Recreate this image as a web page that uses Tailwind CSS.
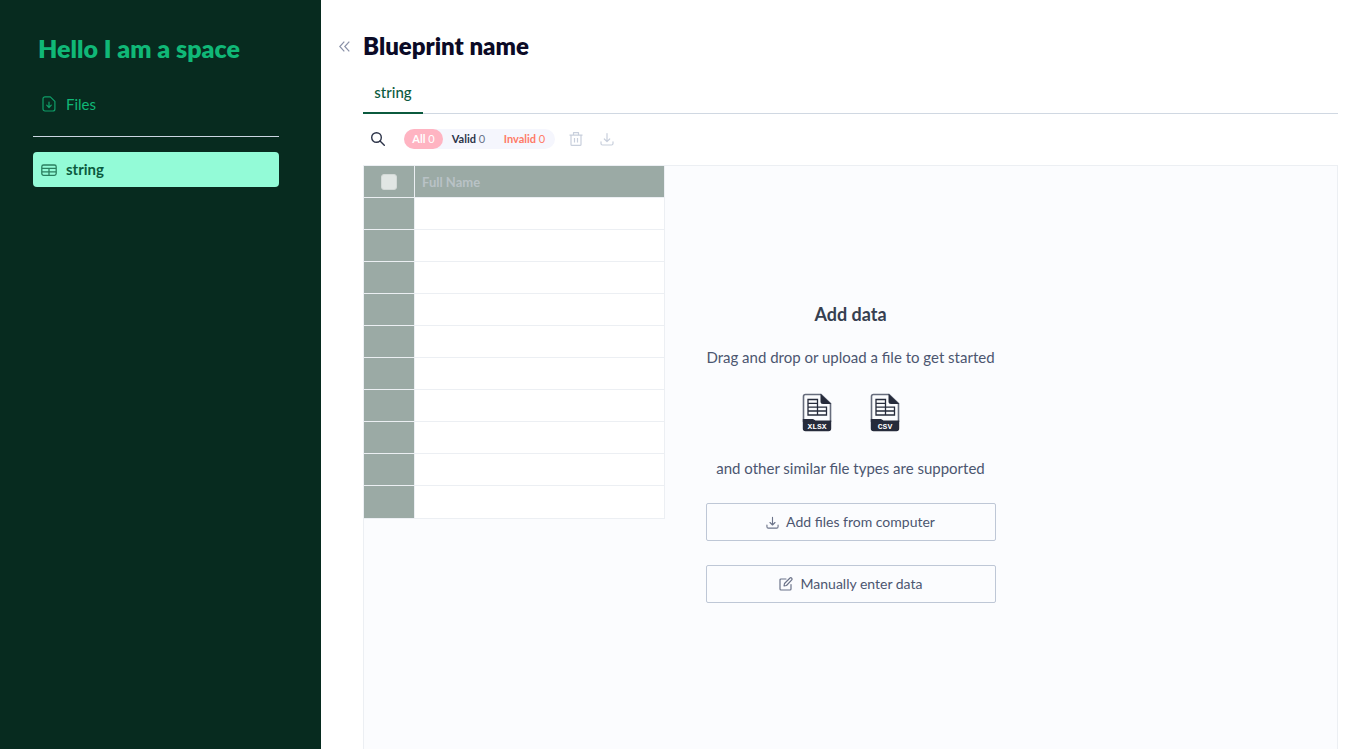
<!DOCTYPE html>
<html lang="en">
<head>
<meta charset="utf-8">
<meta name="viewport" content="width=device-width, initial-scale=1">
<title>Blueprint name</title>
<script src="https://cdn.jsdelivr.net/npm/@tailwindcss/browser@4"></script>
</head>
<body class="flex min-h-screen bg-white font-['Lato','Liberation_Sans',sans-serif] text-[#4c5670]">
<aside class="w-[321px] shrink-0 bg-[#072b1f] pt-[30px] pr-[42px] pl-[33px]">
  <h2 class="pl-[5px] text-[25px] leading-9 font-extrabold whitespace-nowrap text-[#10b877]">Hello I am a space</h2>
  <nav>
    <a href="#files" class="mt-5 flex h-9 items-center gap-[9px] pl-2 text-[15px] text-[#10b877]">
      <svg class="size-4" viewBox="0 0 16 16" fill="none" stroke="#0f9e68" stroke-width="1.200" stroke-linecap="round" stroke-linejoin="round"><path d="M4 .8h5.3l4.6 4.6V13a2 2 0 0 1-2 2H4a2 2 0 0 1-2-2V2.800a2 2 0 0 1 2-2zM8 6v5.300M5.700 9.200 8 11.500l2.300-2.300"/></svg>
      Files
    </a>
    <hr class="mt-[14px] border-[#cbd5e1]">
    <a href="#string" class="mt-[15px] flex h-[35px] items-center gap-[9px] rounded bg-[#93fbd7] pl-2 text-[15px] font-bold text-[#0b5a3e]">
      <svg class="size-4" viewBox="0 0 16 16" fill="none" stroke="#2b7f60" stroke-width="1.300"><rect x=".8" y="3" width="14.400" height="10.400" rx="1.800"/><path d="M1 6.300h14M1 9.800h14M8 6.300v7"/></svg>
      string
    </a>
  </nav>
</aside>
<main class="flex min-w-0 grow flex-col pt-7 pr-[34px] pl-[18px]">
  <header class="flex h-9 items-center gap-[13px]">
    <button type="button" aria-label="Collapse sidebar" class="text-[#8a91a8]">
      <svg class="block h-3 w-[11px]" viewBox="0 0 11 12" fill="none" stroke="currentColor" stroke-width="1.200"><path d="M5.300 1.600.8 6.500l4.500 4.900M10.300 1.600 5.800 6.500l4.500 4.900"/></svg>
    </button>
    <h1 class="text-2xl font-extrabold text-[#0b0a26]">Blueprint name</h1>
  </header>
  <div class="flex grow flex-col pl-6">
    <div role="tablist" class="mt-[9px] flex h-[41px] border-b border-[#d0d8e2]">
      <button type="button" role="tab" aria-selected="true" class="-mb-px h-[41px] w-[60px] border-b-2 border-[#0b5a3e] text-[15px] font-medium text-[#0b5a3e]">string</button>
    </div>
    <div class="flex h-[51px] items-center pb-[2px] pl-2">
      <button type="button" aria-label="Search" class="text-[#2c3348]">
        <svg class="block size-[14px]" viewBox="0 0 14 14" fill="none" stroke="currentColor" stroke-width="1.400" stroke-linecap="round"><circle cx="5.500" cy="5.500" r="4.800"/><path d="m9 9 4.300 4.300"/></svg>
      </button>
      <div class="ml-[19px] flex h-5 rounded-full bg-[#f5f6fd] text-[11px] leading-5">
        <button type="button" class="w-[39px] rounded-full bg-[#ffb4c2] text-white"><b>All</b> 0</button>
        <button type="button" class="w-[51px] text-[#6b7389]"><b class="text-[#2c3348]">Valid</b> 0</button>
        <button type="button" class="w-[61px] text-[#ff7a66]"><b>Invalid</b> 0</button>
      </div>
      <button type="button" aria-label="Delete" disabled class="ml-[14px] text-[#c8cfdc]">
        <svg class="block size-[14px]" viewBox="0 0 14 14" fill="none" stroke="currentColor" stroke-width="1.200" stroke-linejoin="round"><path d="M.5 3.200h13M4.500 3.200V.7h5v2.500M2 3.200v9.200q0 1 1 1h8q1 0 1-1V3.200M5.500 6v4.500M8.500 6v4.500"/></svg>
      </button>
      <button type="button" aria-label="Download" disabled class="ml-[17px] text-[#c8cfdc]">
        <svg class="block size-[14px]" viewBox="0 0 14 14" fill="none" stroke="currentColor" stroke-width="1.200" stroke-linecap="round" stroke-linejoin="round"><path d="M7 1.500v8M4.300 7 7 9.700 9.700 7M1 9.800v1.700q0 1.500 1.500 1.500h9q1.500 0 1.500-1.500V9.800"/></svg>
      </button>
    </div>
    <section class="relative grow border border-b-0 border-[#eceff3] bg-[#fbfcfe]">
      <table class="w-[301px] table-fixed border-separate border-spacing-0">
        <thead>
          <tr class="h-8 bg-[#9baaa5]">
            <th class="w-[51px] border-r border-b border-[#eceff3]"><input type="checkbox" aria-label="Select all rows" class="mx-auto block size-4 appearance-none rounded-[3px] border border-[#d3d9d7] bg-[#e1e6e4]"></th>
            <th class="border-r border-b border-[#eceff3] pl-[7px] text-left text-[13px] leading-5 font-bold text-[#b9c2c6]">Full Name</th>
          </tr>
        </thead>
        <tbody>
          <tr class="h-8"><td class="border-r border-b border-[#eceff3] bg-[#9baaa5]"></td><td class="border-r border-b border-[#eceff3] bg-white"></td></tr>
          <tr class="h-8"><td class="border-r border-b border-[#eceff3] bg-[#9baaa5]"></td><td class="border-r border-b border-[#eceff3] bg-white"></td></tr>
          <tr class="h-8"><td class="border-r border-b border-[#eceff3] bg-[#9baaa5]"></td><td class="border-r border-b border-[#eceff3] bg-white"></td></tr>
          <tr class="h-8"><td class="border-r border-b border-[#eceff3] bg-[#9baaa5]"></td><td class="border-r border-b border-[#eceff3] bg-white"></td></tr>
          <tr class="h-8"><td class="border-r border-b border-[#eceff3] bg-[#9baaa5]"></td><td class="border-r border-b border-[#eceff3] bg-white"></td></tr>
          <tr class="h-8"><td class="border-r border-b border-[#eceff3] bg-[#9baaa5]"></td><td class="border-r border-b border-[#eceff3] bg-white"></td></tr>
          <tr class="h-8"><td class="border-r border-b border-[#eceff3] bg-[#9baaa5]"></td><td class="border-r border-b border-[#eceff3] bg-white"></td></tr>
          <tr class="h-8"><td class="border-r border-b border-[#eceff3] bg-[#9baaa5]"></td><td class="border-r border-b border-[#eceff3] bg-white"></td></tr>
          <tr class="h-8"><td class="border-r border-b border-[#eceff3] bg-[#9baaa5]"></td><td class="border-r border-b border-[#eceff3] bg-white"></td></tr>
          <tr class="h-[33px]"><td class="border-r border-b border-[#eceff3] bg-[#9baaa5]"></td><td class="border-r border-b border-[#eceff3] bg-white"></td></tr>
        </tbody>
      </table>
      <div class="pointer-events-none absolute inset-0 flex items-center justify-center pb-[10px]">
        <div class="pointer-events-auto flex w-[290px] flex-col items-center text-[15px] leading-6 whitespace-nowrap">
          <h3 class="text-lg leading-6 font-bold text-[#363f50]">Add data</h3>
          <p class="mt-[19px]">Drag and drop or upload a file to get started</p>
          <div class="mt-6 flex gap-[38px] text-[#262b3b]">
            <svg role="img" aria-label="XLSX file" class="h-[39px] w-[30px]" viewBox="0 0 30 39" fill="none" stroke="currentColor"><path stroke="#666c7c" stroke-width="1.600" d="M1.500 29V3.500q0-2 2-2H19l9.500 9V29"/><path fill="currentColor" stroke="none" d="M18.500.8 29.300 11h-8.300q-2.500 0-2.500-2.500zM.8 26H11l2.500 1.500h15.700v8q0 2.700-2.700 2.700H3.500Q.8 38.200.8 35.500z"/><path stroke-width="1.300" d="M6 6.500h9.500V22H6zM6 10.300h9.500M6 14.200h18.500V22H15.500M6 18h18.500M15.500 14v8"/><text x="15" y="35.500" text-anchor="middle" fill="#fff" stroke="none" font-size="8" font-weight="700" font-family="Liberation Mono, monospace">XLSX</text></svg>
            <svg role="img" aria-label="CSV file" class="h-[39px] w-[30px]" viewBox="0 0 30 39" fill="none" stroke="currentColor"><path stroke="#666c7c" stroke-width="1.600" d="M1.500 29V3.500q0-2 2-2H19l9.500 9V29"/><path fill="currentColor" stroke="none" d="M18.500.8 29.300 11h-8.300q-2.500 0-2.500-2.500zM.8 26H11l2.500 1.500h15.700v8q0 2.700-2.700 2.700H3.500Q.8 38.200.8 35.500z"/><path stroke-width="1.300" d="M6 6.500h9.500V22H6zM6 10.300h9.500M6 14.200h18.500V22H15.500M6 18h18.500M15.500 14v8"/><text x="15" y="35.500" text-anchor="middle" fill="#fff" stroke="none" font-size="8" font-weight="700" font-family="Liberation Mono, monospace">CSV</text></svg>
          </div>
          <p class="mt-6">and other similar file types are supported</p>
          <button type="button" class="mt-[23px] flex h-[38px] w-full items-center justify-center gap-[7px] rounded-xs border border-[#bec7d6] text-sm">
            <svg class="size-[13px]" viewBox="0 0 14 14" fill="none" stroke="#6b7389" stroke-width="1.200" stroke-linecap="round" stroke-linejoin="round"><path d="M7 1.500v8M4.300 7 7 9.700 9.700 7M1 9.800v1.700q0 1.500 1.500 1.500h9q1.500 0 1.500-1.500V9.800"/></svg>
            Add files from computer
          </button>
          <button type="button" class="mt-6 flex h-[38px] w-full items-center justify-center gap-2 rounded-xs border border-[#bec7d6] text-sm">
            <svg class="size-[14px]" viewBox="0 0 14 14" fill="none" stroke="#6b7389" stroke-width="1.200" stroke-linecap="round" stroke-linejoin="round"><path d="M7 2H2Q1 2 1 3v9q0 1 1 1h9q1 0 1-1V7.500M5 9l.5-2.500L11 1q.8-.6 1.500 0t.5 1.700L7.500 8.500z"/></svg>
            Manually enter data
          </button>
        </div>
      </div>
    </section>
  </div>
</main>
</body>
</html>
